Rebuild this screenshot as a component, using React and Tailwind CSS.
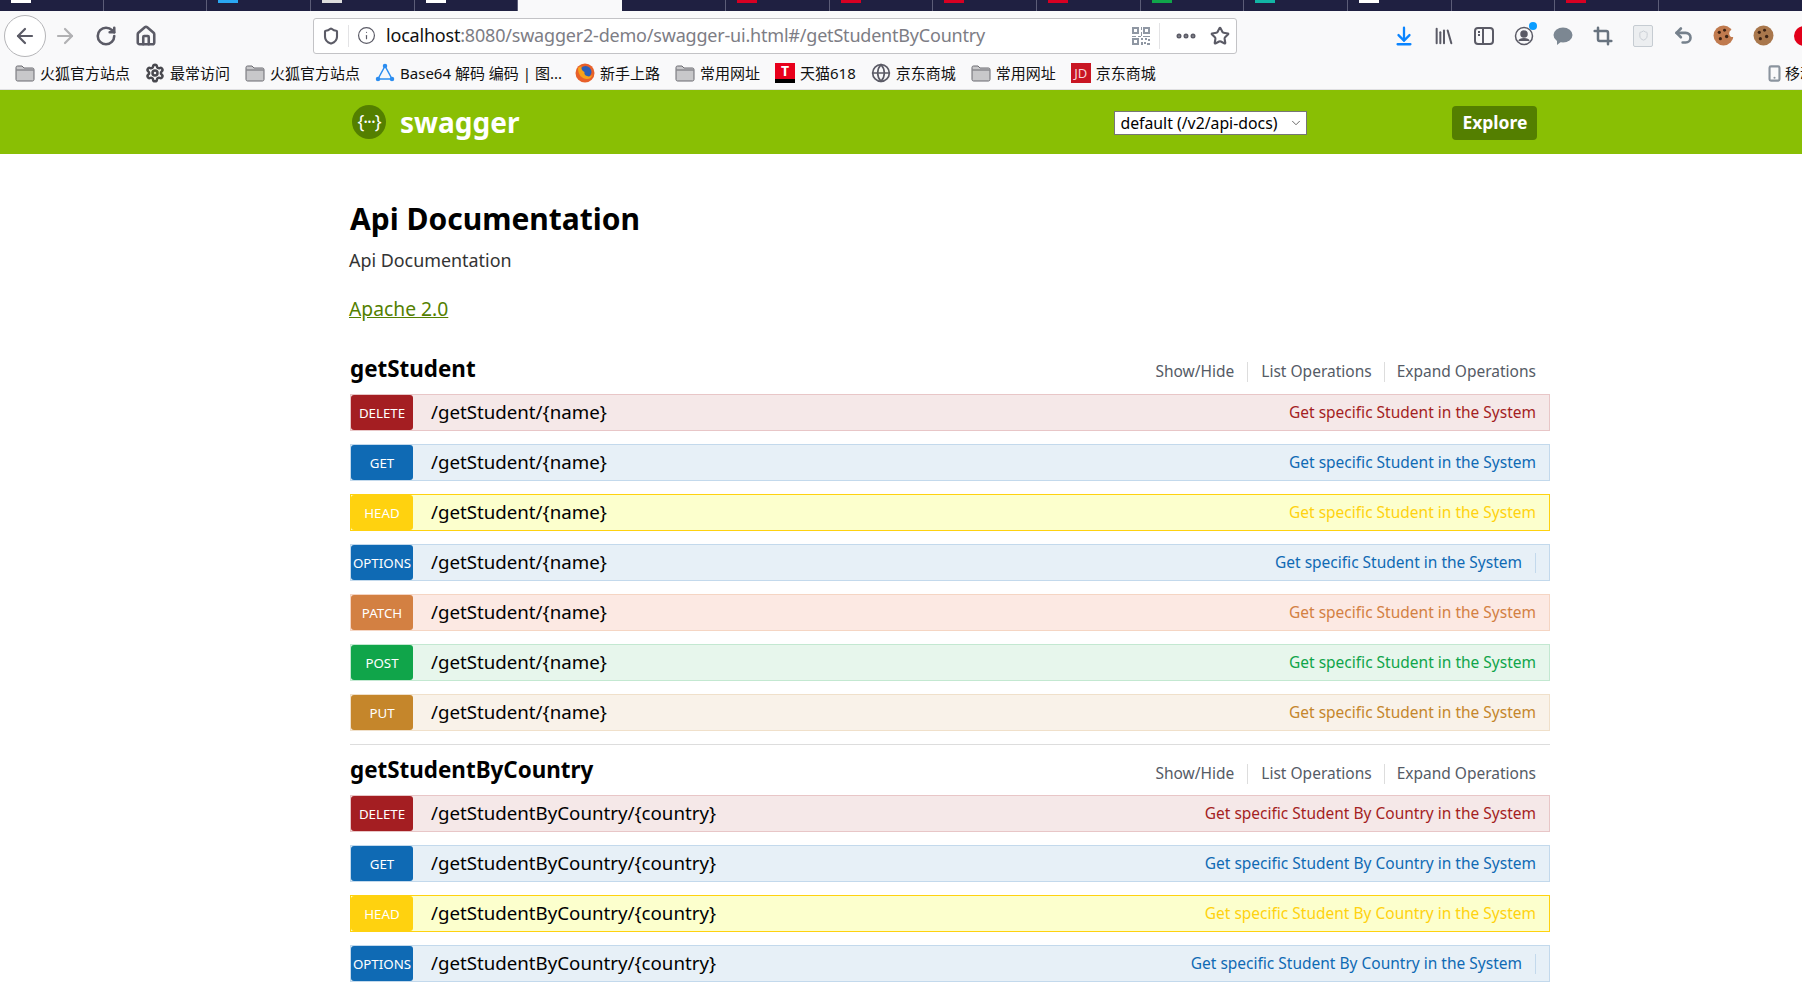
import { ArrowLeft, ArrowRight, RotateCw, Home, Shield, Info, Star, Ellipsis, ArrowDownToLine, Library, Crop, Undo2, Settings, Smartphone, Globe, ChevronDown } from "lucide-react";

const cjk = { fontFamily: '"Noto Sans", "Noto Sans CJK SC", sans-serif' };

const methods = {
  DELETE: { row: "bg-[#f5e8e8] border-[#e8c6c7]", badge: "bg-[#a41e22]", text: "text-[#a41e22]" },
  GET: { row: "bg-[#e7f0f7] border-[#c3d9ec]", badge: "bg-[#0f6ab4]", text: "text-[#0f6ab4]" },
  HEAD: { row: "bg-[#fcffcd] border-[#ffd20f]", badge: "bg-[#ffd20f]", text: "text-[#ffd20f]" },
  OPTIONS: { row: "bg-[#e7f0f7] border-[#c3d9ec]", badge: "bg-[#0f6ab4]", text: "text-[#0f6ab4]" },
  PATCH: { row: "bg-[#fce9e3] border-[#f5d5c3]", badge: "bg-[#d38042]", text: "text-[#d38042]" },
  POST: { row: "bg-[#e7f6ec] border-[#c3e8d1]", badge: "bg-[#10a54a]", text: "text-[#10a54a]" },
  PUT: { row: "bg-[#f9f2e9] border-[#f0e0ca]", badge: "bg-[#c5862b]", text: "text-[#c5862b]" },
};

const tabStubs = [
  "bg-white", "", "bg-[#2aa7f2]", "bg-[#dddddd]", "bg-white", "active", "", "bg-[#d70022]", "bg-[#d70022]", "bg-[#d70022]",
  "bg-[#d70022]", "bg-[#10a54a]", "bg-[#12b5a5]", "bg-white", "", "bg-[#d70022]",
];

const Folder = () => (
  <svg width="20" height="20" viewBox="0 0 20 20" className="shrink-0">
    <path d="M1 4.500C1 3.700 1.600 3 2.500 3H7l2 2h8.500c.8 0 1.500.7 1.500 1.500v10c0 .8-.7 1.500-1.500 1.500h-15C1.700 18 1 17.300 1 16.500Z" fill="#c8c8ca" stroke="#6b6b70" />
    <path d="M1.500 7h17" stroke="#6b6b70" />
  </svg>
);

const Firefox = () => (
  <svg width="20" height="20" viewBox="0 0 20 20" className="shrink-0">
    <circle cx="10" cy="10" r="9.500" fill="#e8602a" />
    <circle cx="10.500" cy="9" r="6" fill="#2b5fb8" />
    <path d="M3 5c0 7 4 11 9 11 3 0 5-2 6-5-1 2-4 3-6 2-2-.5-3-2-2.500-4C7 8 6 6 6.500 3 5 3.500 4 4 3 5Z" fill="#f7a11a" />
  </svg>
);

const Cookie = ({ bite }) => (
  <svg width="21" height="21" viewBox="0 0 20 20" className="shrink-0">
    <circle cx="10" cy="10" r="9.500" fill={bite ? "#c07a4e" : "#a9774c"} />
    <circle cx="6" cy="7" r="1.500" fill="#3d2314" />
    <circle cx="11" cy="5" r="1.400" fill="#3d2314" />
    <circle cx="13" cy="11" r="1.600" fill="#3d2314" />
    <circle cx="7" cy="13" r="1.500" fill="#3d2314" />
    {bite && <circle cx="19" cy="8" r="3.500" fill="#f9f9fa" />}
  </svg>
);

const Bookmark = ({ icon, children, className = "" }) => (
  <div className={`flex items-center gap-[5px] ${className}`}>
    {icon}
    <span className="text-[15px] leading-5 text-[#111] whitespace-nowrap" style={cjk}>{children}</span>
  </div>
);

const Operation = ({ method, path, desc }) => {
  const m = methods[method];
  return (
    <div className={`flex items-center h-[37px] border ${m.row}`}>
      <div className={`w-[62px] h-[35px] pt-[3px] rounded-[3px] flex items-center justify-center text-white text-[13.300px] ${m.badge}`}>{method}</div>
      <div className="ml-[18px] text-[18.700px] text-black">{path}</div>
      {method === "OPTIONS" ? (
        <div className="ml-auto flex items-center">
          <span className={`mt-[1px] text-[15.500px] ${m.text}`}>{desc}</span>
          <span className="ml-[13px] mr-[13px] w-px h-[20px] bg-[#c3d9ec]" />
        </div>
      ) : (
        <span className={`ml-auto mr-[13px] mt-[1px] text-[15.500px] ${m.text}`}>{desc}</span>
      )}
    </div>
  );
};

const Section = ({ name, path, desc, first }) => (
  <section>
    <div className={`flex items-center h-[40px] ${first ? "mt-[28px] mb-[5px]" : "mt-[5px] mb-[5px]"}`}>
      <h2 className="text-[22.400px] font-bold text-black">{name}</h2>
      <div className={`ml-auto mr-[14px] flex items-center text-[15.500px] text-[#555b66] ${first ? "mt-[6px]" : "mt-[7px]"}`}>
        <span>Show/Hide</span>
        <span className="w-px h-[20px] bg-[#dddddd] mx-[13px]" />
        <span>List Operations</span>
        <span className="w-px h-[20px] bg-[#dddddd] mx-[12px]" />
        <span>Expand Operations</span>
      </div>
    </div>
    <div className="flex flex-col gap-[13px]">
      {Object.keys(methods).map((method) => (
        <Operation key={method} method={method} path={path} desc={desc} />
      ))}
    </div>
  </section>
);

export default function App() {
  return (
    <div className="w-[1802px] h-[985px] overflow-hidden bg-white" style={{ fontFamily: '"Noto Sans", sans-serif' }}>
      {/* tab strip, only the bottom edge is in the shot */}
      <div className="flex h-[11px] bg-[#1f2041]">
        {tabStubs.map((stub, i) =>
          stub === "active" ? (
            <div key={i} className="w-[103.700px] bg-[#f9f9fa]" />
          ) : (
            <div key={i} className="w-[103.700px] border-r border-[#5c5d78] pl-[11px]">
              {stub && <div className={`w-[20px] h-[3px] ${stub}`} />}
            </div>
          )
        )}
      </div>

      {/* toolbar */}
      <div className="flex items-center h-[49px] overflow-hidden bg-[#f9f9fa] text-[#5b5b66]">
        <div className="ml-[4px] shrink-0 w-[42px] h-[42px] rounded-full border border-[#b5b5b8] bg-white flex items-center justify-center">
          <ArrowLeft size={24} strokeWidth={2.200} />
        </div>
        <ArrowRight size={24} strokeWidth={2.200} className="ml-[7px] shrink-0 text-[#b1b1b3]" />
        <RotateCw size={22} strokeWidth={2.800} className="ml-[18px] shrink-0" />
        <Home size={22} strokeWidth={2.800} className="ml-[18px] shrink-0" />
        <div className="ml-[156px] shrink-0 w-[924px] h-[36px] flex items-center bg-white border border-[#c3c3c6] rounded-[3px]">
          <Shield size={18} strokeWidth={2.800} className="ml-[8px]" />
          <span className="ml-[8px] w-px h-[22px] bg-[#e3e3e5]" />
          <Info size={19} strokeWidth={1.500} className="ml-[8px]" />
          <div className="ml-[10px] text-[18px] tracking-[-0.2px] text-[#7d7d85] whitespace-nowrap">
            <span className="text-[#111]">localhost</span>:8080/swagger2-demo/swagger-ui.html#/getStudentByCountry
          </div>
          <svg width="18" height="18" viewBox="0 0 18 18" className="ml-auto text-[#8f97a3]" fill="currentColor">
            <path d="M0 0h7v7H0Zm2 2v3h3V2Zm9-2h7v7h-7Zm2 2v3h3V2ZM0 11h7v7H0Zm2 2v3h3v-3Zm7-13h1v3H9Zm0 5h1v4H9Zm-9 4h4v1H0Zm6 0h3v1H6Zm5 0h7v1h-7Zm-2 2h2v2H9Zm4 0h2v2h-2Zm3 1h2v2h-2Zm-7 3h2v3H9Zm3 0h2v2h-2Zm3 1h3v2h-3Z" />
          </svg>
          <span className="ml-[9px] w-px h-[26px] bg-[#e3e3e5]" />
          <Ellipsis size={24} strokeWidth={3} className="ml-[14px]" />
          <Star size={20} strokeWidth={2.500} className="ml-[12px] mr-[6px]" />
        </div>
        <ArrowDownToLine size={22} strokeWidth={2.500} className="ml-[156px] shrink-0 text-[#0a84ff]" />
        <Library size={22} strokeWidth={2.200} className="ml-[18px] shrink-0" />
        <svg width="20" height="20" viewBox="0 0 20 20" fill="none" stroke="currentColor" strokeWidth="2" className="ml-[19px] shrink-0">
          <rect x="1" y="2" width="18" height="16" rx="3" />
          <path d="M9 2v16M4 6h2M4 9h2" />
        </svg>
        <div className="relative ml-[20px] shrink-0">
          <svg width="20" height="20" viewBox="0 0 20 20" fill="none" stroke="currentColor" strokeWidth="1.500">
            <circle cx="10" cy="10" r="8.500" />
            <circle cx="10" cy="8" r="3" fill="currentColor" />
            <path d="M5 15c1-3 9-3 10 0" fill="currentColor" />
          </svg>
          <span className="absolute -top-[4px] -right-[3px] w-[8px] h-[8px] rounded-full bg-[#0a9dff]" />
        </div>
        <svg width="20" height="18" viewBox="0 0 20 18" fill="#7c8792" className="ml-[19px] shrink-0">
          <ellipse cx="10" cy="8" rx="9.500" ry="7.500" />
          <path d="M4 12v6l5-4Z" />
        </svg>
        <Crop size={20} strokeWidth={3} className="ml-[20px] shrink-0 text-[#68737f]" />
        <div className="ml-[20px] shrink-0 w-[20px] h-[22px] rounded-[2px] border border-[#c6ccd2] bg-[#eceef0] flex items-center justify-center">
          <Shield size={11} strokeWidth={2} className="text-[#c6ccd2]" />
        </div>
        <Undo2 size={21} strokeWidth={3} className="ml-[20px] shrink-0 text-[#76818c]" />
        <div className="ml-[19px] shrink-0"><Cookie bite /></div>
        <div className="ml-[19px] shrink-0"><Cookie /></div>
        <div className="ml-[20px] w-[20px] h-[20px] rounded-full bg-[#e2001a] shrink-0" />
      </div>

      {/* bookmarks */}
      <div className="flex items-center h-[30px] pb-[3px] bg-[#f9f9fa] border-b border-[#e0e0e2]">
        <Bookmark className="ml-[15px]" icon={<Folder />}>火狐官方站点</Bookmark>
        <Bookmark className="ml-[15px]" icon={<Settings size={20} strokeWidth={3} className="text-[#4a4a4f]" />}>最常访问</Bookmark>
        <Bookmark className="ml-[15px]" icon={<Folder />}>火狐官方站点</Bookmark>
        <Bookmark className="ml-[15px]" icon={
          <svg width="20" height="20" viewBox="0 0 20 20" fill="none" stroke="#2d8ef0" strokeWidth="1.500">
            <path d="M10 3 3 16h14Z" />
            <circle cx="10" cy="3" r="1.500" fill="#2d8ef0" />
            <circle cx="3" cy="16" r="1.500" fill="#2d8ef0" />
            <circle cx="17" cy="16" r="1.500" fill="#2d8ef0" />
          </svg>
        }>Base64 解码 编码 | 图...</Bookmark>
        <Bookmark className="ml-[13px]" icon={<Firefox />}>新手上路</Bookmark>
        <Bookmark className="ml-[15px]" icon={<Folder />}>常用网址</Bookmark>
        <Bookmark className="ml-[15px]" icon={
          <div className="w-[20px] h-[20px] bg-[#e8001c] border-b-[4px] border-black flex items-center justify-center text-white text-[14px] font-bold leading-none shrink-0">T</div>
        }>天猫618</Bookmark>
        <Bookmark className="ml-[15px]" icon={<Globe size={20} strokeWidth={2} className="text-[#5b5b66]" />}>京东商城</Bookmark>
        <Bookmark className="ml-[15px]" icon={<Folder />}>常用网址</Bookmark>
        <Bookmark className="ml-[15px]" icon={
          <div className="w-[20px] h-[20px] bg-[#c91623] flex items-center justify-center text-[#f7d5d8] text-[13px] leading-none shrink-0">JD</div>
        }>京东商城</Bookmark>
        <Bookmark className="ml-auto -mr-[13px]" icon={<Smartphone size={17} strokeWidth={3} className="text-[#8b949e] -mr-[3px]" />}>移动</Bookmark>
      </div>

      {/* swagger header */}
      <header className="flex items-center h-[64px] bg-[#89bf04]">
        <div className="ml-[352px] w-[34px] h-[34px] rounded-full bg-[#547f00] flex items-center justify-center text-white text-[18px] tracking-[-1px] leading-none pb-[2px]">{"{···}"}</div>
        <span className="ml-[14px] text-[28px] font-bold text-white leading-none">swagger</span>
        <div className="relative ml-[595px] mt-[2px] w-[193px] h-[24px]">
          <select defaultValue="default" className="appearance-none w-full h-full bg-white border border-[#767676] text-[15.800px] text-black pl-[5px] rounded-none">
            <option value="default">default (/v2/api-docs)</option>
          </select>
          <ChevronDown size={14} strokeWidth={1.500} className="absolute right-[4px] top-[5px] text-[#555] pointer-events-none" />
        </div>
        <button className="ml-[145px] mt-[1px] w-[85px] h-[34px] rounded-[4px] bg-[#547f00] text-white text-[17.500px] font-bold">Explore</button>
      </header>

      <main className="ml-[350px] w-[1200px]">
        <h1 className="mt-[45px] h-[40px] leading-[40px] text-[30px] font-bold text-black">Api Documentation</h1>
        <p className="-ml-px mt-[9px] h-[24px] leading-[24px] text-[17.900px] text-[#333]">Api Documentation</p>
        <a className="-ml-px block w-fit mt-[25px] h-[24px] leading-[24px] text-[19.300px] text-[#547f00] underline">Apache 2.0</a>
        <Section first name="getStudent" path="/getStudent/{name}" desc="Get specific Student in the System" />
        <div className="mt-[13px] h-px bg-[#dddddd]" />
        <Section name="getStudentByCountry" path="/getStudentByCountry/{country}" desc="Get specific Student By Country in the System" />
      </main>
    </div>
  );
}
